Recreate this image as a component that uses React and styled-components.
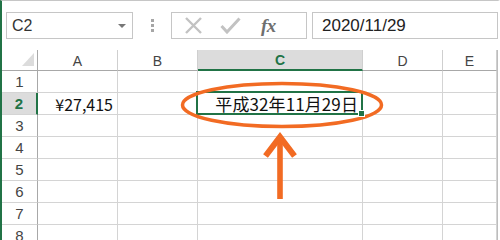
import React from 'react';
import styled, { createGlobalStyle } from 'styled-components';

const GlobalStyle = createGlobalStyle`
  html, body {
    margin: 0;
    padding: 0;
    background: #ffffff;
  }
  body {
    font-family: 'Liberation Sans', 'Noto Sans CJK JP', sans-serif;
  }
`;

const GREEN = '#217346';
const ORANGE = '#f26b23';
const GRID = '#d4d4d4';

const Frame = styled.div`
  position: relative;
  width: 500px;
  height: 240px;
  box-sizing: border-box;
  overflow: hidden;
  border-left: 2px solid ${GREEN};
  border-top: 1px solid #c6c6c6;
  border-right: 2px solid #ffffff;
  background: #ffffff;
`;

const Toolbar = styled.div`
  display: flex;
  align-items: flex-start;
  height: 49px;
  padding-top: 11px;
  box-sizing: border-box;
  background: #ffffff;
`;

const NameBox = styled.div`
  display: flex;
  align-items: center;
  justify-content: space-between;
  margin-left: 4px;
  width: 127px;
  height: 27px;
  box-sizing: border-box;
  border: 1px solid #c6c6c6;
  padding: 0 6px 0 5px;
  font-size: 16px;
  color: #333;
`;

const DropArrow = styled.span`
  width: 0;
  height: 0;
  border-left: 4px solid transparent;
  border-right: 4px solid transparent;
  border-top: 4px solid #777;
`;

const Divider = styled.div`
  width: 38px;
  height: 27px;
  display: flex;
  flex-direction: column;
  align-items: center;
  justify-content: center;
  gap: 2px;

  span {
    width: 3px;
    height: 3px;
    background: #a6a6a6;
  }
`;

const FormulaButtons = styled.div`
  display: flex;
  align-items: center;
  width: 136px;
  height: 27px;
  box-sizing: border-box;
  border: 1px solid #c6c6c6;
  padding-left: 12px;
  gap: 17px;
`;

const Fx = styled.span`
  font-family: 'Liberation Serif', serif;
  font-style: italic;
  font-weight: 700;
  font-size: 19px;
  color: #6f6f6f;
  margin-left: 3px;
  letter-spacing: -0.5px;
`;

const FormulaInput = styled.div`
  flex: 1;
  height: 27px;
  box-sizing: border-box;
  margin-left: 5px;
  border: 1px solid #c6c6c6;
  padding-left: 9px;
  display: flex;
  align-items: center;
  font-size: 17px;
  color: #222;
`;

const Sheet = styled.div`
  display: grid;
  grid-template-columns: 36px 80px 80px 165px 80px 1fr;
  grid-template-rows: 21px repeat(8, 22px);
  border-right: 1px solid #bdbdbd;
`;

const Corner = styled.div`
  position: relative;
  box-sizing: border-box;
  border-right: 1px solid #a8a8a8;
  border-bottom: 1px solid #a8a8a8;

  &::after {
    content: '';
    position: absolute;
    right: 3px;
    bottom: 4px;
    width: 0;
    height: 0;
    border-left: 12px solid transparent;
    border-bottom: 13px solid #dcdcdc;
  }
`;

const ColHead = styled.div`
  display: flex;
  align-items: center;
  justify-content: center;
  box-sizing: border-box;
  padding-top: 1px;
  border-right: 1px solid #cfcfcf;
  border-bottom: ${({ $active }) => ($active ? `2px solid ${GREEN}` : '1px solid #a8a8a8')};
  background: ${({ $active }) => ($active ? '#dcdcdc' : '#ffffff')};
  color: ${({ $active }) => ($active ? GREEN : '#444')};
  font-weight: ${({ $active }) => ($active ? 700 : 400)};
  font-size: 14px;
`;

const RowHead = styled.div`
  display: flex;
  align-items: center;
  justify-content: center;
  box-sizing: border-box;
  border-bottom: 1px solid ${GRID};
  border-right: ${({ $active }) => ($active ? `2px solid ${GREEN}` : '1px solid #a8a8a8')};
  background: ${({ $active }) => ($active ? '#dcdcdc' : '#ffffff')};
  color: ${({ $active }) => ($active ? GREEN : '#444')};
  font-weight: ${({ $active }) => ($active ? 700 : 400)};
  font-size: 15px;
`;

const Cell = styled.div`
  position: relative;
  display: flex;
  align-items: center;
  justify-content: flex-end;
  box-sizing: border-box;
  padding-right: 4px;
  border-right: 1px solid ${GRID};
  border-bottom: 1px solid ${GRID};
  font-family: 'Noto Sans CJK JP', sans-serif;
  font-size: 16px;
  color: #111;
  white-space: nowrap;

  ${({ $selected }) =>
    $selected &&
    `
    &::after {
      content: '';
      position: absolute;
      top: -2px;
      left: -2px;
      right: -1px;
      bottom: -1px;
      border: 2px solid ${GREEN};
    }
    &::before {
      content: '';
      position: absolute;
      right: -3px;
      bottom: -3px;
      width: 5px;
      height: 5px;
      background: ${GREEN};
      border: 1px solid #fff;
      z-index: 2;
    }
  `}
`;

const DateText = styled.span`
  font-family: 'Noto Sans CJK JP', sans-serif;
  font-size: 17px;
  letter-spacing: 0.1px;
`;

const Overlay = styled.svg`
  position: absolute;
  left: -2px;
  top: -1px;
  width: 500px;
  height: 240px;
  pointer-events: none;
`;

const cols = ['A', 'B', 'C', 'D', 'E'];
const rows = [1, 2, 3, 4, 5, 6, 7, 8];

const cellContent = {
  'A2': '¥27,415',
  'C2': <DateText>平成32年11月29日</DateText>,
};

export default function App() {
  return (
    <>
      <GlobalStyle />
      <Frame>
        <Toolbar>
          <NameBox>
            <span>C2</span>
            <DropArrow />
          </NameBox>
          <Divider>
            <span />
            <span />
            <span />
          </Divider>
          <FormulaButtons>
            <svg width="19" height="17" viewBox="0 0 19 17">
              <path d="M2 1 L17 16 M17 1 L2 16" stroke="#c2c2c2" strokeWidth="2.4" fill="none" />
            </svg>
            <svg width="21" height="17" viewBox="0 0 21 17">
              <path d="M1.5 9 L7 15 L19.5 1.5" stroke="#c2c2c2" strokeWidth="3" fill="none" />
            </svg>
            <Fx>fx</Fx>
          </FormulaButtons>
          <FormulaInput>2020/11/29</FormulaInput>
        </Toolbar>
        <Sheet>
          <Corner />
          {cols.map((c) => (
            <ColHead key={c} $active={c === 'C'}>
              {c}
            </ColHead>
          ))}
          {rows.map((r) => (
            <React.Fragment key={r}>
              <RowHead $active={r === 2}>{r}</RowHead>
              {cols.map((c) => (
                <Cell key={c} $selected={c === 'C' && r === 2}>
                  {cellContent[`${c}${r}`]}
                </Cell>
              ))}
            </React.Fragment>
          ))}
        </Sheet>
        <Overlay viewBox="0 0 500 240">
          <ellipse cx="282" cy="105" rx="99.5" ry="21.5" fill="none" stroke={ORANGE} strokeWidth="3.5" />
          <path d="M265.5 156 L280 137 L294.5 156" fill="none" stroke={ORANGE} strokeWidth="6" strokeLinejoin="miter" />
          <rect x="277.2" y="138" width="5.6" height="61" fill={ORANGE} />
        </Overlay>
      </Frame>
    </>
  );
}
